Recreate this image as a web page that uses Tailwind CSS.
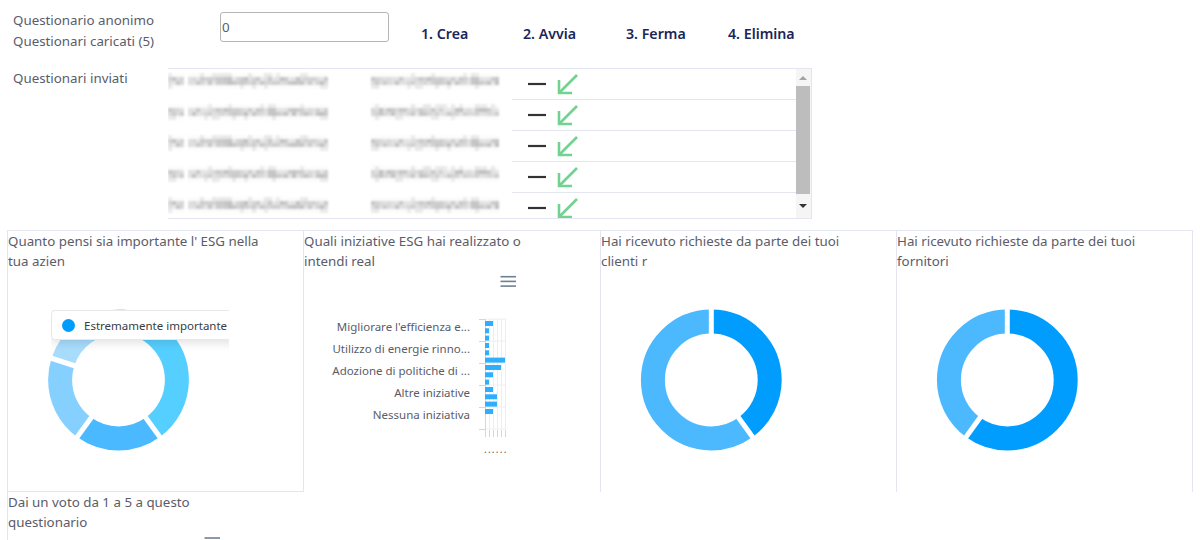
<!DOCTYPE html>
<html lang="it">
<head>
    <meta charset="UTF-8">
    <title>Questionari</title>
    <script src="https://cdn.jsdelivr.net/npm/@tailwindcss/browser@4"></script>
</head>
<body class="h-[540px] overflow-hidden bg-white font-['Noto_Sans','sans-serif'] text-[13.33px] leading-[21px] text-[#5a5c69]">
    <!-- Top row -->
    <div class="flex h-[68px] pl-[13px] pt-[10px]">
        <div class="w-[207px]">
            <div>Questionario anonimo</div>
            <div>Questionari caricati (5)</div>
        </div>
        <input type="text" value="0" class="mt-[2px] h-[30px] w-[169px] rounded-[3px] border border-[#b5b5b5] pl-px text-[13.33px] text-[#5a5c69]">
        <div class="ml-[32px] mt-[13px] flex text-[14.2px] font-semibold text-[#1b2559]">
            <span class="w-[102px]">1. Crea</span>
            <span class="w-[103px]">2. Avvia</span>
            <span class="w-[102px]">3. Ferma</span>
            <span>4. Elimina</span>
        </div>
    </div>

    <!-- Sent questionnaires -->
    <div class="flex pl-[13px]">
        <div class="w-[155px]">Questionari inviati</div>
        <div class="flex h-[151px] w-[644px] border-y border-r border-[#e3e6f0]">
            <div class="flex-1 overflow-hidden" id="rows"></div>
            <div class="flex w-[15px] flex-col items-start bg-[#f5f5f5]">
                <div class="flex h-[17px] w-[14px] items-center justify-center">
                    <div class="h-0 w-0 border-x-[4px] border-b-[4px] border-x-transparent border-b-[#a3a3a3]"></div>
                </div>
                <div class="h-[108px] w-[14px] bg-[#bdbdbd]"></div>
                <div class="flex h-[24px] w-[14px] items-center justify-center">
                    <div class="h-0 w-0 border-x-[4px] border-t-[4px] border-x-transparent border-t-[#333]"></div>
                </div>
            </div>
        </div>
    </div>

    <!-- Charts -->
    <div class="ml-[7px] mt-[11px] grid w-[1186px] grid-cols-[296px_297px_296px_297px]">
        <div class="relative h-[262px] border-l border-t border-b border-[#e3e6f0]">
            <div class="w-[255px] leading-[20px]">Quanto pensi sia importante l' ESG nella tua azien</div>
            <svg width="295" height="220" class="block">
                <g transform="translate(110.5 109)">
                    <g transform="rotate(-90)" fill="none" stroke-width="24">
                        <circle r="58.4" pathLength="100" stroke="#55cfff" stroke-dasharray="40 60"></circle>
                        <circle r="58.4" pathLength="100" stroke="#4ab9ff" stroke-dasharray="20 80" stroke-dashoffset="-40"></circle>
                        <circle r="58.4" pathLength="100" stroke="#85d0ff" stroke-dasharray="20 80" stroke-dashoffset="-60"></circle>
                        <circle r="58.4" pathLength="100" stroke="#a8dcfd" stroke-dasharray="10 90" stroke-dashoffset="-80"></circle>
                        <circle r="58.4" pathLength="100" stroke="#9fdcff" stroke-dasharray="10 90" stroke-dashoffset="-90"></circle>
                    </g>
                    <g stroke="#fff" stroke-width="5">
                        <line x1="0" y1="0" x2="44" y2="60.7"></line>
                        <line x1="0" y1="0" x2="-44" y2="60.7"></line>
                        <line x1="0" y1="0" x2="-71" y2="-23"></line>
                    </g>
                </g>
            </svg>
            <!-- tooltip, cut off on the right like in the chart box -->
            <div class="absolute left-[43px] top-[79px] h-[45px] w-[178px] overflow-hidden">
                <div class="flex h-[30px] w-[200px] items-center rounded-[4px] border border-[#e8e8e8] bg-white pl-[10px] text-[11.5px] text-[#373d3f] shadow-[0_3px_10px_rgba(0,0,0,0.12)]">
                    <span class="mr-[9px] h-[13px] w-[13px] rounded-full bg-[#009dff]"></span>
                    <span>Estremamente importante</span>
                </div>
            </div>
        </div>

        <div class="h-[262px] border-l border-t border-[#e3e6f0]">
            <div class="w-[255px] leading-[20px]">Quali iniziative ESG hai realizzato o intendi real</div>
            <svg width="295" height="220" class="block">
                <g stroke="#6e8192" stroke-width="1.6">
                    <line x1="196.5" y1="5.7" x2="212" y2="5.7"></line>
                    <line x1="196.5" y1="10.4" x2="212" y2="10.4"></line>
                    <line x1="196.5" y1="15.1" x2="212" y2="15.1"></line>
                </g>
                <g fill="#5a5c69" font-size="11.5" text-anchor="end">
                    <text x="166" y="60">Migliorare l'efficienza e...</text>
                    <text x="166" y="82">Utilizzo di energie rinno...</text>
                    <text x="166" y="104">Adozione di politiche di ...</text>
                    <text x="166" y="126">Altre iniziative</text>
                    <text x="166" y="148">Nessuna iniziativa</text>
                </g>
                <g stroke="#eeeeee" stroke-width="1">
                    <line x1="181.5" y1="48" x2="202" y2="48"></line>
                    <line x1="181.5" y1="70" x2="202" y2="70"></line>
                    <line x1="181.5" y1="92" x2="202" y2="92"></line>
                    <line x1="181.5" y1="114" x2="202" y2="114"></line>
                    <line x1="181.5" y1="136" x2="202" y2="136"></line>
                    <line x1="181.5" y1="158" x2="202" y2="158"></line>
                    <line x1="185.5" y1="48" x2="185.5" y2="158"></line>
                    <line x1="189.5" y1="48" x2="189.5" y2="158"></line>
                    <line x1="193.5" y1="48" x2="193.5" y2="158"></line>
                    <line x1="197.5" y1="48" x2="197.5" y2="158"></line>
                    <line x1="201.5" y1="48" x2="201.5" y2="158"></line>
                </g>
                <g stroke="#d6d6d6" stroke-width="1">
                    <line x1="175" y1="48.5" x2="181" y2="48.5"></line>
                    <line x1="175" y1="70.5" x2="181" y2="70.5"></line>
                    <line x1="175" y1="92.5" x2="181" y2="92.5"></line>
                    <line x1="175" y1="114.5" x2="181" y2="114.5"></line>
                    <line x1="175" y1="136.5" x2="181" y2="136.5"></line>
                    <line x1="175" y1="158.5" x2="181" y2="158.5"></line>
                    <line x1="181.5" y1="48" x2="181.5" y2="166"></line>
                    <line x1="185.5" y1="159" x2="185.5" y2="166"></line>
                    <line x1="189.5" y1="159" x2="189.5" y2="166"></line>
                    <line x1="193.5" y1="159" x2="193.5" y2="166"></line>
                    <line x1="197.5" y1="159" x2="197.5" y2="166"></line>
                    <line x1="201.5" y1="159" x2="201.5" y2="166"></line>
                </g>
                <g fill="#2eaefc">
                    <rect x="181" y="50" width="8" height="5"></rect>
                    <rect x="181" y="57.3" width="4" height="5"></rect>
                    <rect x="181" y="64.6" width="4" height="5"></rect>
                    <rect x="181" y="72" width="4" height="5"></rect>
                    <rect x="181" y="79.3" width="4" height="5"></rect>
                    <rect x="181" y="86.6" width="20" height="5"></rect>
                    <rect x="181" y="94" width="16" height="5"></rect>
                    <rect x="181" y="101.3" width="8" height="5"></rect>
                    <rect x="181" y="108.6" width="4" height="5"></rect>
                    <rect x="181" y="116" width="8" height="5"></rect>
                    <rect x="181" y="123.3" width="12" height="5"></rect>
                    <rect x="181" y="130.6" width="12" height="5"></rect>
                    <rect x="181" y="138" width="8" height="5"></rect>
                </g>
                <text x="180" y="182" font-size="10" letter-spacing="1.25" fill="#5a5c69">......</text>
            </svg>
        </div>

        <div class="h-[262px] border-l border-t border-[#e3e6f0]">
            <div class="w-[255px] leading-[20px]">Hai ricevuto richieste da parte dei tuoi clienti r</div>
            <svg width="295" height="220" class="block">
                <g transform="translate(110.3 109)">
                    <g transform="rotate(-90)" fill="none" stroke-width="24">
                        <circle r="58.4" pathLength="100" stroke="#009dff" stroke-dasharray="40 60"></circle>
                        <circle r="58.4" pathLength="100" stroke="#4cb9ff" stroke-dasharray="60 40" stroke-dashoffset="-40"></circle>
                    </g>
                    <g stroke="#fff" stroke-width="5">
                        <line x1="0" y1="0" x2="0" y2="-75"></line>
                        <line x1="0" y1="0" x2="44" y2="60.7"></line>
                    </g>
                </g>
            </svg>
        </div>

        <div class="h-[262px] border-x border-t border-[#e3e6f0]">
            <div class="w-[255px] leading-[20px]">Hai ricevuto richieste da parte dei tuoi fornitori</div>
            <svg width="295" height="220" class="block">
                <g transform="translate(110.3 109)">
                    <g transform="rotate(-90)" fill="none" stroke-width="24">
                        <circle r="58.4" pathLength="100" stroke="#009dff" stroke-dasharray="60 40"></circle>
                        <circle r="58.4" pathLength="100" stroke="#4cb9ff" stroke-dasharray="40 60" stroke-dashoffset="-60"></circle>
                    </g>
                    <g stroke="#fff" stroke-width="5">
                        <line x1="0" y1="0" x2="0" y2="-75"></line>
                        <line x1="0" y1="0" x2="-44" y2="60.7"></line>
                    </g>
                </g>
            </svg>
        </div>

        <div class="h-[48px] overflow-hidden border-l border-[#e3e6f0]">
            <div class="w-[200px] leading-[20px]">Dai un voto da 1 a 5 a questo questionario</div>
            <svg width="295" height="20" class="block">
                <g stroke="#6e8192" stroke-width="1.6">
                    <line x1="196.5" y1="6" x2="212" y2="6"></line>
                    <line x1="196.5" y1="11" x2="212" y2="11"></line>
                    <line x1="196.5" y1="16" x2="212" y2="16"></line>
                </g>
            </svg>
        </div>
    </div>

    <script>
        // blurred rows: the names in the picture are masked by a mosaic
        function cell(seed, i, j) {
            const n = Math.sin(seed * 12.9 + i * 78.2 + j * 37.7) * 43758.5;
            return n - Math.floor(n);
        }

        function mosaic(seed) {
            let out = '';
            [[0, 160], [203, 126]].forEach(([x0, w], part) => {
                for (let j = 0; j < 4; j++) {
                    for (let i = 0; i < w / 4; i++) {
                        if (part === 0 && i === 4) continue;
                        let v = cell(seed + part, i, j);
                        // top and bottom cells are only ascenders and descenders
                        if (j === 0 || j === 3) v = v > 0.75 ? v * 0.5 : 0;
                        const shade = Math.round((j === 0 || j === 3 ? 252 : 232) - v * 40);
                        out += `<rect x="${x0 + i * 4}" y="${j * 4 + 4}" width="4" height="4" fill="rgb(${shade},${shade},${shade})"/>`;
                    }
                }
            });
            return out;
        }

        const rows = document.getElementById('rows');
        for (let r = 0; r < 5; r++) {
            const row = document.createElement('div');
            row.className = 'flex h-[31px]';
            row.innerHTML = `
                <svg width="344" height="31" class="block shrink-0 blur-[1px]" shape-rendering="crispEdges">${mosaic(r % 2 + 1)}</svg>
                <div class="flex flex-1 border-b border-[#e3e6f0]">
                    <svg width="70" height="30" class="block">
                        <line x1="16" y1="15" x2="34" y2="15" stroke="#333" stroke-width="2.2"></line>
                        <g fill="none" stroke="#72d391" stroke-width="2.6">
                            <path d="M65 6 L47 24"></path>
                            <path d="M47 11 V24 H60"></path>
                        </g>
                    </svg>
                </div>`;
            rows.appendChild(row);
        }
    </script>
</body>
</html>
